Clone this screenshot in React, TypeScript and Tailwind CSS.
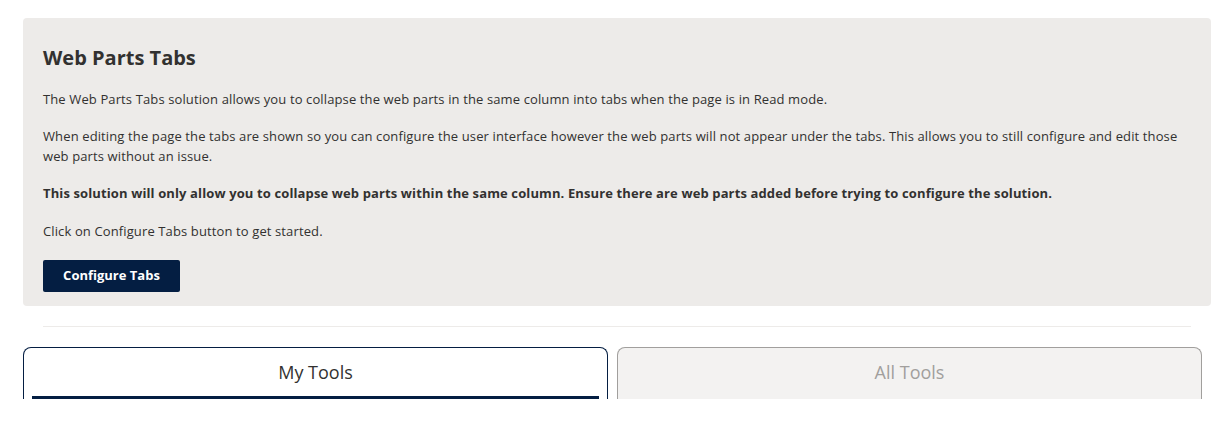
import React from 'react';

const font = { fontFamily: '"Segoe UI", "Open Sans", "Liberation Sans", sans-serif' };

export default function App() {
  return (
    <div className="w-[1230px] h-[437px] overflow-hidden bg-white text-[#323130]" style={font}>
      <div className="pt-[18px] px-[23px] pr-[19px]">
        <div className="bg-[#edebe9] rounded-[4px] px-5 pt-[26px] pb-[14px]">
          <h2 className="text-[20px] font-bold leading-[28px] mb-[17px]">Web Parts Tabs</h2>
          <div className="text-[13px] leading-[20px] tracking-[0.12px]">
            <p className="mb-[17px]">
              The Web Parts Tabs solution allows you to collapse the web parts in the same column into tabs when the page is in Read mode.
            </p>
            <p className="mb-[17px]">
              When editing the page the tabs are shown so you can configure the user interface however the web parts will not appear under the tabs. This allows you to still configure and edit those web parts without an issue.
            </p>
            <p className="mb-[18px] font-bold">
              This solution will only allow you to collapse web parts within the same column. Ensure there are web parts added before trying to configure the solution.
            </p>
            <p className="mb-[19px]">Click on Configure Tabs button to get started.</p>
          </div>
          <button className="h-[32px] w-[137px] bg-[#041e42] text-white text-[13px] font-bold rounded-[2px]">
            Configure Tabs
          </button>
        </div>
        <div className="mx-5 mt-[20px] border-t border-[#edebe9]" />
        <div className="mt-[20px] grid grid-cols-2 gap-[9px] pr-[9px]">
          <div className="h-[52px] border border-b-0 border-[#041e42] rounded-t-[8px] bg-white px-2 flex flex-col">
            <div className="flex-1 flex items-center justify-center text-[18px] text-[#323130] pt-[1px]">My Tools</div>
            <div className="h-[3px] bg-[#041e42]" />
          </div>
          <div className="h-[52px] border border-b-0 border-[#a19f9d] rounded-t-[8px] bg-[#f3f2f1] flex flex-col">
            <div className="flex-1 flex items-center justify-center text-[18px] text-[#a19f9d] pb-[2px]">All Tools</div>
          </div>
        </div>
      </div>
    </div>
  );
}
